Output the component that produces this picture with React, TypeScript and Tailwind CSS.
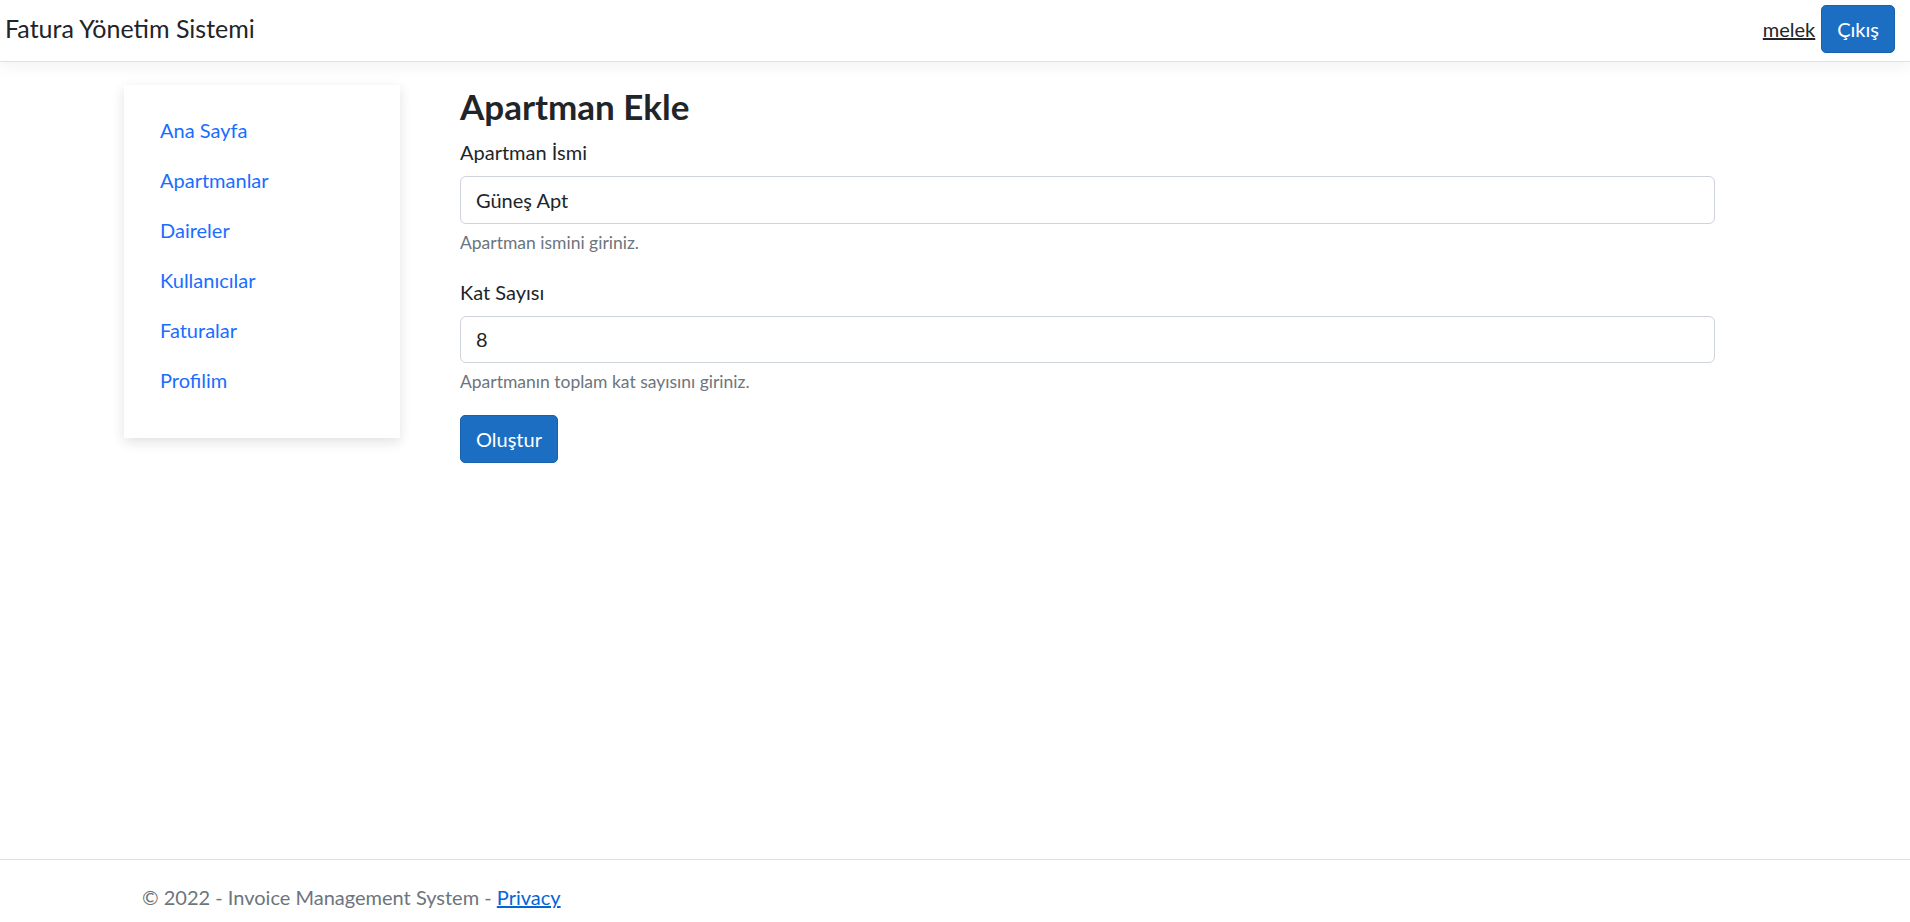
import React from "react";

export default function App() {
  const links = ["Ana Sayfa", "Apartmanlar", "Daireler", "Kullanıcılar", "Faturalar", "Profilim"];
  return (
    <div className="min-h-[935px] bg-white font-['Lato',sans-serif] text-[20px] leading-[30px] text-[#212529] flex flex-col">
      <nav className="h-[62px] border-b border-[#dee2e6] shadow-[0_5px_15px_rgba(0,0,0,0.05)] bg-white">
        <div className="h-[57px] flex items-center justify-between pl-[5px] pr-[15px]">
          <span className="text-[25px] leading-[37px] text-[#212529]">Fatura Yönetim Sistemi</span>
          <div className="flex items-center gap-[6px]">
            <a href="#" className="underline text-[#212529]">melek</a>
            <button className="h-[48px] px-[15px] rounded-[5px] bg-[#1b6ec2] border border-[#1861ac] text-white">
              Çıkış
            </button>
          </div>
        </div>
      </nav>
      <main className="flex-1 flex items-start pt-[23px] pl-[124px] gap-[60px]">
        <div className="w-[276px] bg-white shadow-[0_4px_12px_rgba(0,0,0,0.12)] pl-[16px] pt-[20px] pb-[33px]">
          <ul className="flex flex-col">
            {links.map((l) => (
              <li key={l}>
                <a href="#" className="block px-[20px] py-[10px] text-[#1a6dff]">{l}</a>
              </li>
            ))}
          </ul>
        </div>
        <div className="w-[1255px]">
          <h3 className="text-[35px] leading-[42px] font-bold mb-[10px]">Apartman Ekle</h3>
          <div className="mb-[21px]">
            <label className="block mb-[9px]">Apartman İsmi</label>
            <input
              readOnly
              value="Güneş Apt"
              className="block w-full h-[47.5px] px-[15px] border border-[#ced4da] rounded-[6px] text-[#212529] outline-none"
            />
            <div className="mt-[6px] text-[17.5px] leading-[26px] text-[#6c757d]">Apartman ismini giriniz.</div>
          </div>
          <div className="mb-[20px]">
            <label className="block mb-[9px]">Kat Sayısı</label>
            <input
              readOnly
              value="8"
              className="block w-full h-[47.5px] px-[15px] border border-[#ced4da] rounded-[6px] text-[#212529] outline-none"
            />
            <div className="mt-[6px] text-[17.5px] leading-[26px] text-[#6c757d]">Apartmanın toplam kat sayısını giriniz.</div>
          </div>
          <button className="h-[47.5px] px-[15px] rounded-[5px] bg-[#1b6ec2] border border-[#1861ac] text-white">
            Oluştur
          </button>
        </div>
      </main>
      <footer className="border-t border-[#dee2e6] h-[76px]">
        <div className="pl-[142px] leading-[75px] text-[#6c757d] whitespace-nowrap">
          © 2022 - Invoice Management System - <a href="#" className="text-[#0366d6] underline">Privacy</a>
        </div>
      </footer>
    </div>
  );
}
